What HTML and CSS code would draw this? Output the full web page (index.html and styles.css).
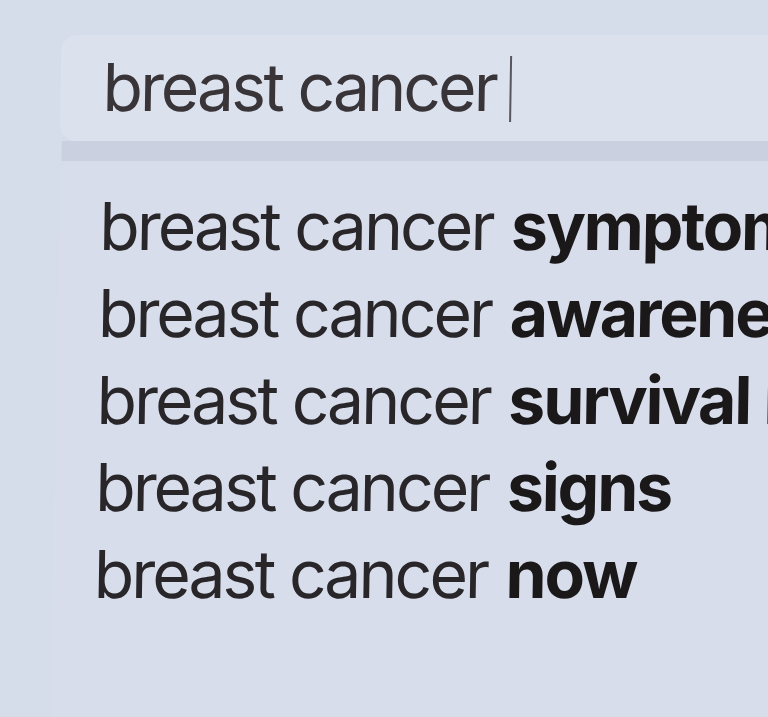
FILE: index.html
```html
<!DOCTYPE html>
<html lang="en">
<head>
<meta charset="utf-8">
<title>breast cancer search</title>
<link rel="stylesheet" href="styles.css">
</head>
<body>
<div class="screen">
  <div class="search">
    <span class="query">breast cancer</span><span class="caret"></span>
  </div>
  <div class="divider"></div>
  <ul class="suggestions">
    <li>breast cancer <b>symptoms</b></li>
    <li>breast cancer <b>awareness</b></li>
    <li>breast cancer <b>survival rate</b></li>
    <li>breast cancer <b>signs</b></li>
    <li>breast cancer <b>now</b></li>
  </ul>
</div>
</body>
</html>
```

FILE: styles.css
```css
html, body {
  margin: 0;
  padding: 0;
  height: 100%;
  overflow: hidden;
}

body {
  background: #d5dcea;
  font-family: "Inter", "Roboto", "Liberation Sans", sans-serif;
  color: #2a2729;
}

.screen {
  width: 900px;
  padding-top: 35px;
  transform: skewX(-0.9deg);
  transform-origin: 0 0;
}

.search {
  margin-left: 62px;
  height: 106px;
  border-radius: 16px 0 0 16px;
  background: #dce1ee;
  display: flex;
  align-items: center;
  padding-left: 42px;
  font-size: 66px;
  letter-spacing: -2.9px;
  color: #383438;
}

.query {
  line-height: 1;
  padding-bottom: 2px;
}

.caret {
  width: 2px;
  height: 66px;
  margin-left: 14px;
  margin-top: 2px;
  background: #56565f;
}

.divider {
  margin-left: 64px;
  height: 20px;
  background: #cad0df;
}

.suggestions {
  list-style: none;
  margin: 0 0 0 62px;
  padding: 22px 0 200px 41px;
  background: #d7ddeb;
  border-radius: 16px 0 0 0;
  font-size: 66px;
  line-height: 87px;
  letter-spacing: -2.9px;
  white-space: nowrap;
  color: #29262a;
}

.suggestions b {
  font-weight: 700;
  color: #1b181a;
  letter-spacing: -2.1px;
  margin-left: 3px;
}
```
